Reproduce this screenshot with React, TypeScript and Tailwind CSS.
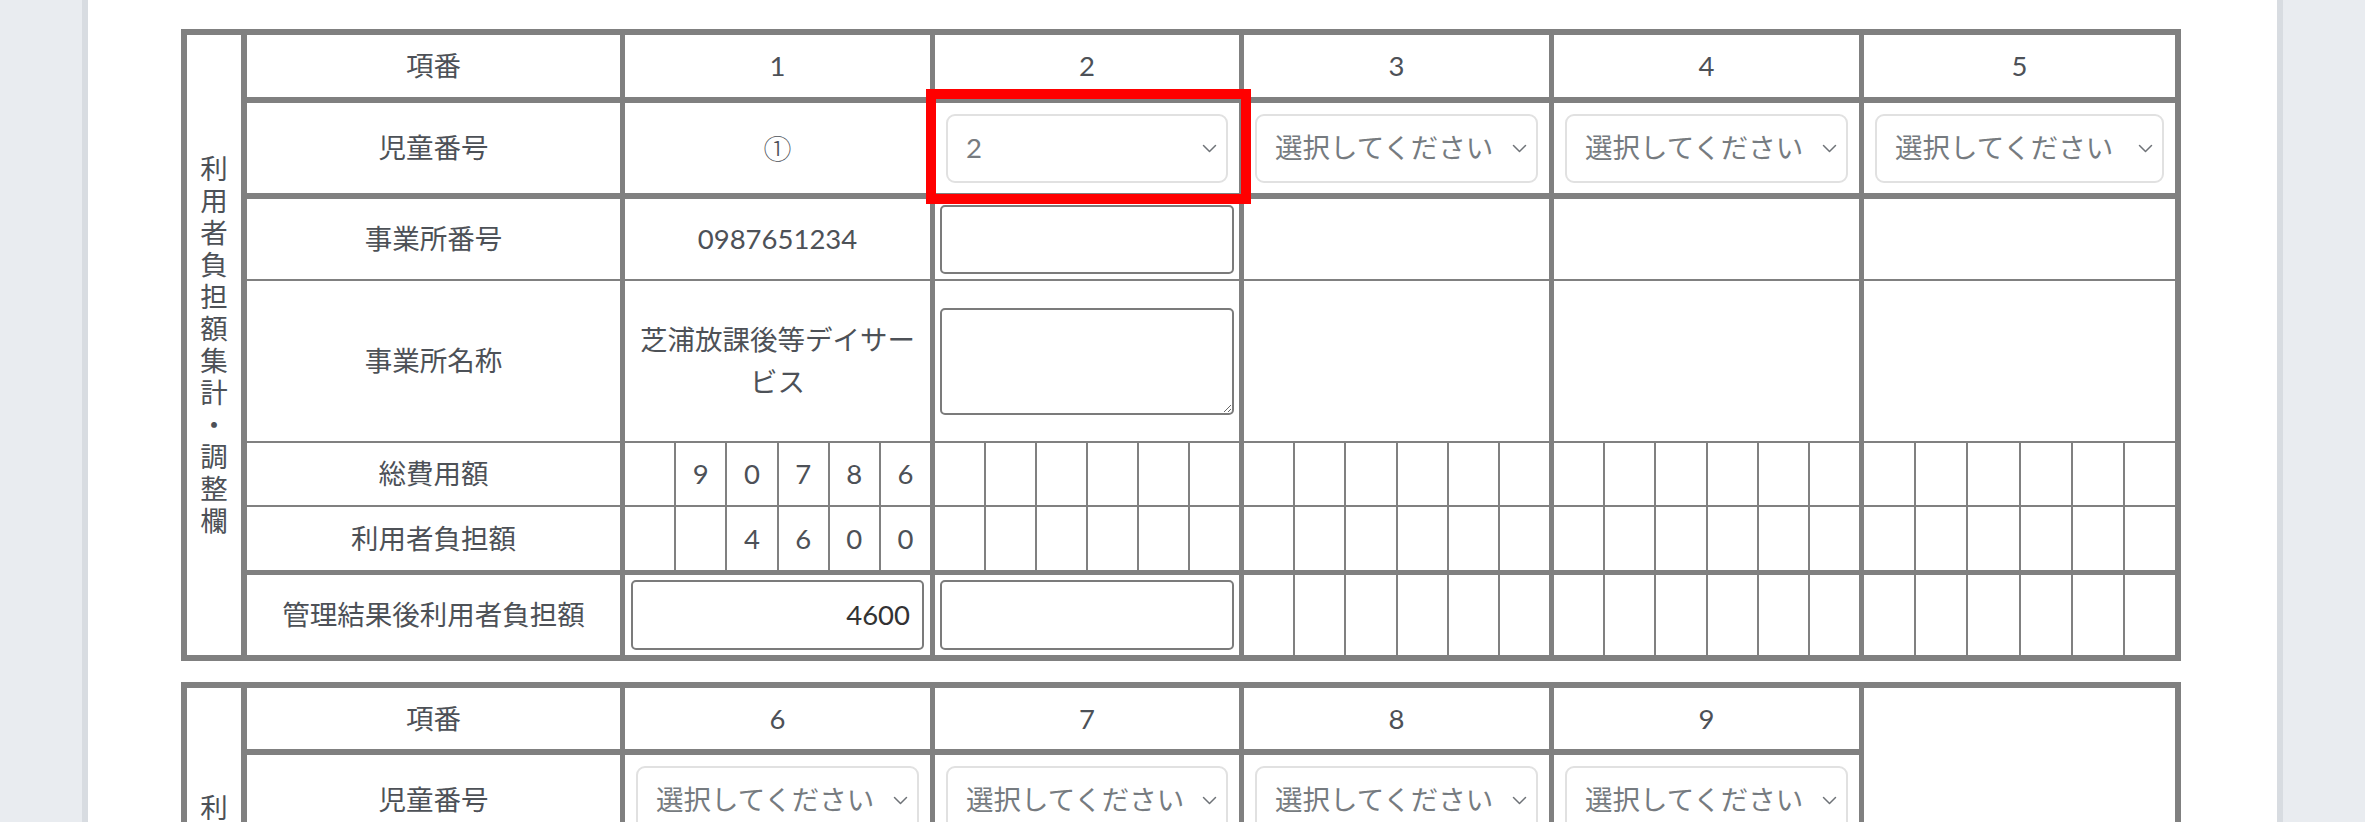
import React from "react";

const VTEXT = "利用者負担額集計・調整欄".split("");

function Chevron() {
  return (
    <svg width="15" height="9" viewBox="0 0 15 9" className="shrink-0">
      <path d="M1.5 1.5 L7.5 7.5 L13.5 1.5" stroke="#6f7378" strokeWidth="1.5" fill="none" strokeLinecap="round" strokeLinejoin="round" />
    </svg>
  );
}

function Select({ value }: { value?: string }) {
  return (
    <div className="h-[69px] w-full rounded-[9px] border-2 border-[#e1e1e1] bg-white flex items-center justify-between pl-[18px] pr-[9px] text-[#767b80] whitespace-nowrap overflow-hidden">
      <span>{value ?? "選択してください"}</span>
      <Chevron />
    </div>
  );
}

function Digits({ values }: { values?: string[] }) {
  const v = values ?? ["", "", "", "", "", ""];
  return (
    <div className="flex h-full w-full">
      {v.map((d, i) => (
        <div
          key={i}
          className={
            i === 0
              ? "flex-1 flex items-center justify-center"
              : "flex-1 flex items-center justify-center border-l-2 border-[#808080]"
          }
        >
          {d}
        </div>
      ))}
    </div>
  );
}

type Cell = React.ReactNode;

const W_BORDERED = ["w-[310px]", "w-[309px]", "w-[310px]", "w-[310px]"];

function Row({
  cls,
  label,
  cells,
  lastW,
  pad,
}: {
  cls: string;
  label: string;
  cells: Cell[];
  lastW: string;
  pad: string;
}) {
  return (
    <div className={"flex border-[#808080] " + cls}>
      <div className="w-[378px] shrink-0 border-r-[5px] border-[#808080] flex items-center justify-center text-center">
        {label}
      </div>
      {cells.map((c, i) => {
        const last = i === cells.length - 1;
        const w = last ? lastW : W_BORDERED[i];
        return (
          <div
            key={i}
            className={
              w +
              " shrink-0 h-full flex items-center justify-center text-center " +
              pad +
              (last ? "" : " border-r-[5px] border-[#808080]")
            }
          >
            {c}
          </div>
        );
      })}
    </div>
  );
}

function VerticalCol() {
  return (
    <div className="w-[60px] shrink-0 border-r-[6px] border-[#808080] flex flex-col items-center justify-center">
      {VTEXT.map((c, i) => (
        <div key={i} className="leading-[32px] h-[32px]">
          {c}
        </div>
      ))}
    </div>
  );
}

function Table1() {
  const d = () => <Digits />;
  return (
    <div className="relative">
      <div className="flex w-[2000px] border-[6px] border-[#808080]">
        <VerticalCol />
        <div className="flex flex-col">
          <Row cls="h-[68px] border-b-[6px]" label="項番" lastW="w-[311px]" pad="" cells={["1", "2", "3", "4", "5"]} />
          <Row
            cls="h-[96px] border-b-[6px]"
            label="児童番号"
            lastW="w-[311px]"
            pad="px-[11px]"
            cells={[
              <span className="font-['Noto_Sans_CJK_JP',sans-serif] text-[28px] font-light">①</span>,
              <Select value="2" />,
              <Select />,
              <Select />,
              <Select />,
            ]}
          />
          <Row
            cls="h-[82px] border-b-2"
            label="事業所番号"
            lastW="w-[311px]"
            pad="px-[5px]"
            cells={[
              "0987651234",
              <div className="h-[69px] w-full rounded-[5px] border-2 border-[#7b7b7b] bg-white" />,
              "",
              "",
              "",
            ]}
          />
          <Row
            cls="h-[162px] border-b-2"
            label="事業所名称"
            lastW="w-[311px]"
            pad="px-[5px]"
            cells={[
              <div className="px-[7px] leading-[42px]">芝浦放課後等デイサービス</div>,
              <textarea className="h-[107px] w-full rounded-[5px] border-2 border-[#7b7b7b] bg-white outline-none" />,
              "",
              "",
              "",
            ]}
          />
          <Row
            cls="h-[64px] border-b-2"
            label="総費用額"
            lastW="w-[311px]"
            pad=""
            cells={[<Digits values={["", "9", "0", "7", "8", "6"]} />, d(), d(), d(), d()]}
          />
          <Row
            cls="h-[68px] border-b-[5px]"
            label="利用者負担額"
            lastW="w-[311px]"
            pad=""
            cells={[<Digits values={["", "", "4", "6", "0", "0"]} />, d(), d(), d(), d()]}
          />
          <Row
            cls="h-[80px]"
            label="管理結果後利用者負担額"
            lastW="w-[311px]"
            pad=""
            cells={[
              <div className="mx-[6px] h-[70px] w-full rounded-[5px] border-2 border-[#7b7b7b] bg-white flex items-center justify-end pr-[12px] text-[#333333]">
                4600
              </div>,
              <div className="mx-[5px] h-[70px] w-full rounded-[5px] border-2 border-[#7b7b7b] bg-white" />,
              d(),
              d(),
              d(),
            ]}
          />
        </div>
      </div>
      <div className="pointer-events-none absolute left-[745px] top-[60px] h-[115px] w-[325px] border-[10px] border-[#ff0000]" />
    </div>
  );
}

function Table2() {
  const d = () => <Digits />;
  return (
    <div className="flex w-[2000px] border-[6px] border-[#808080]">
      <VerticalCol />
      <div className="flex flex-col">
        <Row cls="h-[67px] border-b-[6px]" label="項番" lastW="w-[305px]" pad="" cells={["6", "7", "8", "9"]} />
        <Row
          cls="h-[96px] border-b-[6px]"
          label="児童番号"
          lastW="w-[305px]"
          pad="px-[11px]"
          cells={[<Select />, <Select />, <Select />, <Select />]}
        />
        <Row cls="h-[82px] border-b-2" label="事業所番号" lastW="w-[305px]" pad="" cells={["", "", "", ""]} />
        <Row cls="h-[135px] border-b-2" label="事業所名称" lastW="w-[305px]" pad="" cells={["", "", "", ""]} />
        <Row cls="h-[64px] border-b-2" label="総費用額" lastW="w-[305px]" pad="" cells={[d(), d(), d(), d()]} />
        <Row cls="h-[68px] border-b-[5px]" label="利用者負担額" lastW="w-[305px]" pad="" cells={[d(), d(), d(), d()]} />
        <Row cls="h-[80px]" label="管理結果後利用者負担額" lastW="w-[305px]" pad="" cells={[d(), d(), d(), d()]} />
      </div>
      <div className="w-[316px] shrink-0 border-l-[5px] border-[#808080]" />
    </div>
  );
}

export default function App() {
  return (
    <div className="min-h-screen w-[2365px] bg-[#e9ecf0] px-[82px] font-['Lato','Noto_Sans_CJK_JP',sans-serif] text-[27.5px] text-[#4d5157]">
      <div className="min-h-screen border-x-[6px] border-[#d8dce1] bg-white pl-[93px] pt-[29px] pb-[40px]">
        <Table1 />
        <div className="mt-[21px]">
          <Table2 />
        </div>
      </div>
    </div>
  );
}
